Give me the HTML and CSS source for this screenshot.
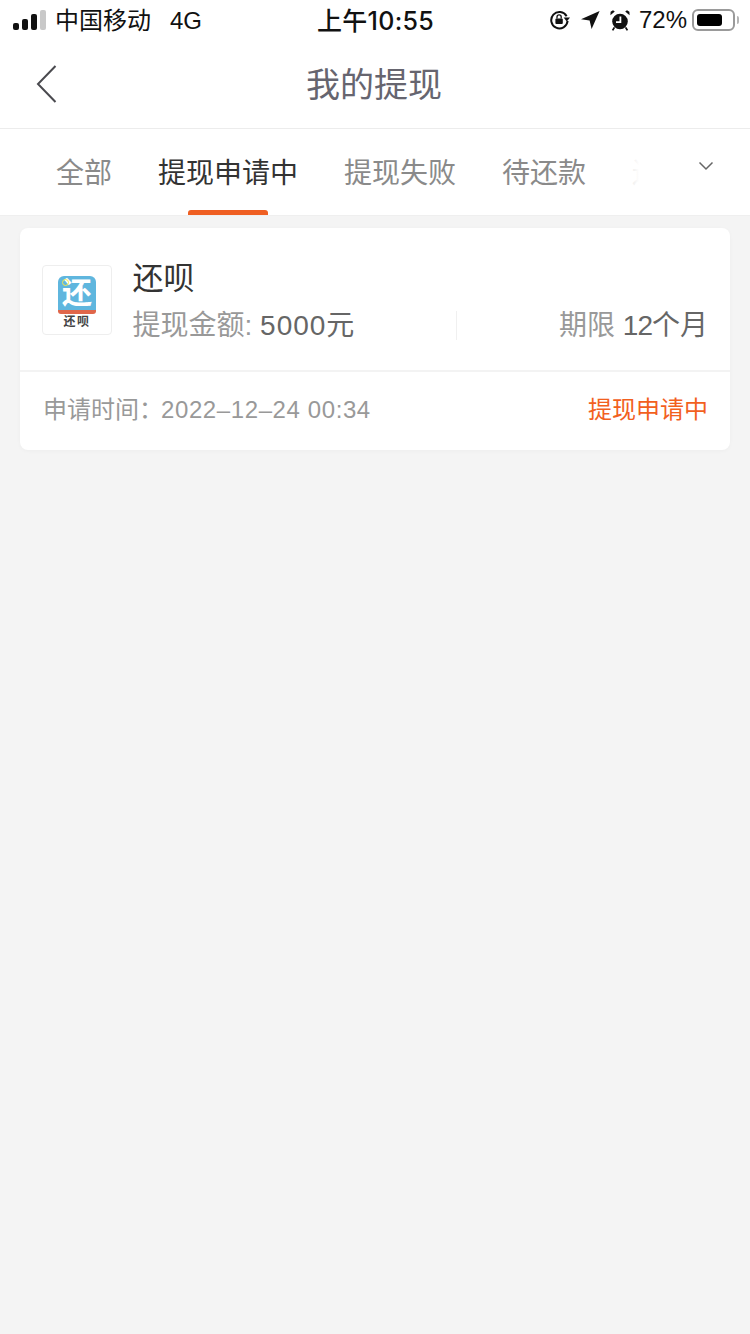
FILE: index.html
```html
<!DOCTYPE html>
<html lang="zh-CN">
<head>
    <meta charset="UTF-8">
    <meta name="viewport" content="width=device-width, initial-scale=1.0">
    <title>我的提现</title>
    <link rel="stylesheet" href="styles.css">
</head>
<body>
    <div class="status-bar">
        <div class="status-left">
            <div class="signal">
                <span class="bar bar-1"></span>
                <span class="bar bar-2"></span>
                <span class="bar bar-3"></span>
                <span class="bar bar-4"></span>
            </div>
            <span class="carrier">中国移动</span>
            <span class="network">4G</span>
        </div>
        <div class="status-time">上午10:55</div>
        <div class="status-right">
            <svg class="icon-lock" width="22" height="20" viewBox="0 0 22 20">
                <path d="M17.6 6.2A8.2 8.2 0 1 0 18.6 11" fill="none" stroke="#111" stroke-width="2"/>
                <path d="M14.6 7.6h6.4l-3.2 3.8z" fill="#111"/>
                <rect x="6.4" y="8.4" width="7.4" height="5.6" rx="1" fill="#111"/>
                <path d="M8 8.6V7a2.1 2.1 0 0 1 4.2 0v1.6" fill="none" stroke="#111" stroke-width="1.3"/>
            </svg>
            <svg class="icon-location" width="19" height="18" viewBox="0 0 19 18">
                <path d="M18.6 0 0 8.2l8.6 1.2 2 8.6z" fill="#111"/>
            </svg>
            <svg class="icon-alarm" width="20" height="21" viewBox="0 0 20 21">
                <circle cx="10" cy="11.5" r="7.8" fill="#111"/>
                <path d="M10.4 6.5v5.6H6" fill="none" stroke="#fff" stroke-width="1.8"/>
                <path d="M.4 5.2 4.8 1.4 3 .2.6 1.8zM19.6 5.2 15.2 1.4 17 .2l2.4 1.6z" fill="#111"/>
                <path d="M4.4 17.4 2.6 20.4M15.6 17.4l1.8 3" stroke="#111" stroke-width="1.8"/>
            </svg>
            <span class="battery-text">72%</span>
            <div class="battery">
                <div class="battery-level"></div>
            </div>
            <span class="battery-cap"></span>
        </div>
    </div>

    <header class="nav-bar">
        <svg class="back-icon" width="22" height="38" viewBox="0 0 22 38">
            <path d="M20.5 1 3 19l17.500 18" fill="none" stroke="#4a4a4f" stroke-width="2"/>
        </svg>
        <h1 class="nav-title">我的提现</h1>
    </header>

    <nav class="tabs">
        <div class="tab-list">
            <div class="tab">全部</div>
            <div class="tab tab-active">提现申请中</div>
            <div class="tab">提现失败</div>
            <div class="tab">待还款</div>
            <div class="tab">还款中</div>
        </div>
        <div class="tab-more">
            <svg width="16" height="10" viewBox="0 0 16 10">
                <path d="M1.500 1.500 8 8l6.500-6.500" fill="none" stroke="#666" stroke-width="1.500"/>
            </svg>
        </div>
    </nav>

    <main class="content">
        <section class="card">
            <div class="card-main">
                <div class="logo-box">
                    <div class="logo-square">
                        <span class="logo-dot"></span>
                        还
                    </div>
                    <div class="logo-name">还呗</div>
                </div>
                <div class="card-info">
                    <div class="product-name">还呗</div>
                    <div class="card-row">
                        <div class="amount"><span class="muted">提现金额:</span> <span class="amount-num">5000</span>元</div>
                        <div class="term"><span class="muted">期限</span> <span class="term-num">12</span>个月</div>
                    </div>
                </div>
            </div>
            <div class="card-foot">
                <span>申请时间：<span class="apply-time">2022–12–24 00:34</span></span>
                <span class="apply-status">提现申请中</span>
            </div>
        </section>
    </main>
</body>
</html>
```

FILE: styles.css
```css
* {
    box-sizing: border-box;
}

body {
    margin: 0;
    min-height: 1334px;
    background-color: #f4f4f4;
    color: #333;
    font-family: "Liberation Sans", "Noto Sans CJK SC", sans-serif;
    overflow: hidden;
}

.status-bar {
    display: flex;
    justify-content: space-between;
    align-items: center;
    height: 40px;
    padding: 0 11px 0 13px;
    background-color: #fff;
    color: #111;
    position: relative;
}

.status-left,
.status-right {
    display: flex;
    align-items: center;
}

.signal {
    display: flex;
    align-items: flex-end;
    gap: 3px;
    height: 20px;
    margin-top: -1px;
}

.bar {
    width: 6px;
    background-color: #111;
    border-radius: 2px;
}

.bar-1 { height: 7px; }
.bar-2 { height: 11px; }
.bar-3 { height: 16px; }
.bar-4 { height: 20px; background-color: #c8c8c8; }

.carrier {
    margin-left: 9px;
    padding-bottom: 4px;
    font-size: 24px;
}

.network {
    margin-left: 19px;
    padding-top: 2px;
    font-size: 24px;
}

.status-time {
    position: absolute;
    left: 317px;
    padding-bottom: 2px;
    font-family: "Inter", "Noto Sans CJK SC", sans-serif;
    font-size: 25px;
    font-weight: 500;
    letter-spacing: 0.3px;
}

.icon-location {
    margin-left: 10px;
}

.icon-alarm {
    margin-left: 10px;
}

.battery-text {
    margin-left: 9px;
    font-size: 24px;
}

.battery {
    width: 43px;
    height: 22px;
    margin-left: 5px;
    padding: 3px;
    border: 2px solid #9a9a9a;
    border-radius: 6px;
}

.battery-level {
    width: 25px;
    height: 12px;
    background-color: #000;
    border-radius: 3px;
}

.battery-cap {
    width: 2px;
    height: 8px;
    margin-left: 2px;
    background-color: #b5b5b5;
    border-radius: 0 2px 2px 0;
}

.nav-bar {
    display: flex;
    justify-content: center;
    align-items: center;
    height: 89px;
    background-color: #fff;
    border-bottom: 1px solid #ececec;
    position: relative;
}

.back-icon {
    position: absolute;
    left: 35px;
    top: 25px;
}

.nav-title {
    margin: 0 2px 0 0;
    padding-bottom: 4px;
    font-size: 34px;
    font-weight: 400;
    color: #66656f;
}

.tabs {
    height: 87px;
    background-color: #fff;
    border-bottom: 1px solid #efefef;
    position: relative;
    overflow: hidden;
}

.tab-list {
    display: flex;
    gap: 46px;
    padding-left: 56px;
    white-space: nowrap;
}

.tab {
    height: 86px;
    padding-top: 22px;
    font-size: 28px;
    color: #8a8a8a;
    position: relative;
    flex-shrink: 0;
}

.tab-active {
    color: #333;
}

.tab-active::after {
    content: "";
    position: absolute;
    left: 30px;
    bottom: 0;
    width: 80px;
    height: 5px;
    background-color: #ef5f22;
    border-radius: 3px 3px 0 0;
}

.tab-more {
    position: absolute;
    top: 0;
    right: 0;
    bottom: 0;
    width: 118px;
    padding: 32px 0 0 66px;
    background: linear-gradient(to right, rgba(255, 255, 255, 0.85), #fff 6%);
}

.tab-more svg {
    display: block;
}

.content {
    padding: 12px 20px 0;
}

.card {
    height: 222px;
    background-color: #fff;
    border-radius: 8px;
    box-shadow: 0 1px 4px rgba(0, 0, 0, 0.03);
}

.card-main {
    display: flex;
    height: 144px;
    padding: 37px 22px 0 22px;
    border-bottom: 2px solid #f3f3f3;
}

.logo-box {
    width: 70px;
    height: 70px;
    padding-top: 10px;
    border: 1px solid #eeeeee;
    border-radius: 4px;
    flex-shrink: 0;
    text-align: center;
}

.logo-square {
    width: 38px;
    height: 38px;
    margin: 0 auto;
    background-color: #5fb6de;
    border-bottom: 4px solid #e0664a;
    border-radius: 6px 6px 3px 3px;
    color: #fff;
    font-size: 30px;
    font-weight: 700;
    line-height: 33px;
    position: relative;
}

.logo-dot {
    position: absolute;
    left: 4px;
    top: 3px;
    width: 7px;
    height: 7px;
    border: 1.5px solid #f6e84a;
    border-radius: 50%;
}

.logo-name {
    margin-top: 1px;
    font-size: 12px;
    font-weight: 700;
    letter-spacing: 1.5px;
    line-height: 14px;
    color: #444;
}

.card-info {
    flex: 1;
    margin-left: 20.5px;
    margin-top: -9px;
}

.product-name {
    font-size: 31px;
    line-height: 46px;
    color: #333;
}

.card-row {
    display: flex;
    justify-content: space-between;
    margin-top: 3px;
    font-size: 28px;
    line-height: 42px;
    color: #666;
}

.amount {
    position: relative;
    flex: 1;
}

.amount-num {
    letter-spacing: 1px;
}

.amount::after {
    content: "";
    position: absolute;
    right: 0;
    top: 6px;
    width: 1px;
    height: 29px;
    background-color: #f0f0f0;
}

.term {
    flex-shrink: 0;
    margin-left: 102px;
}

.term-num {
    letter-spacing: -1px;
}

.muted {
    color: #999;
}

.card-foot {
    display: flex;
    justify-content: space-between;
    align-items: center;
    height: 76px;
    padding: 0 22px 5px 23px;
    font-size: 24px;
    color: #999;
}

.apply-time {
    margin-left: -2px;
    letter-spacing: 0.6px;
}

.apply-status {
    color: #f2601e;
}
```
